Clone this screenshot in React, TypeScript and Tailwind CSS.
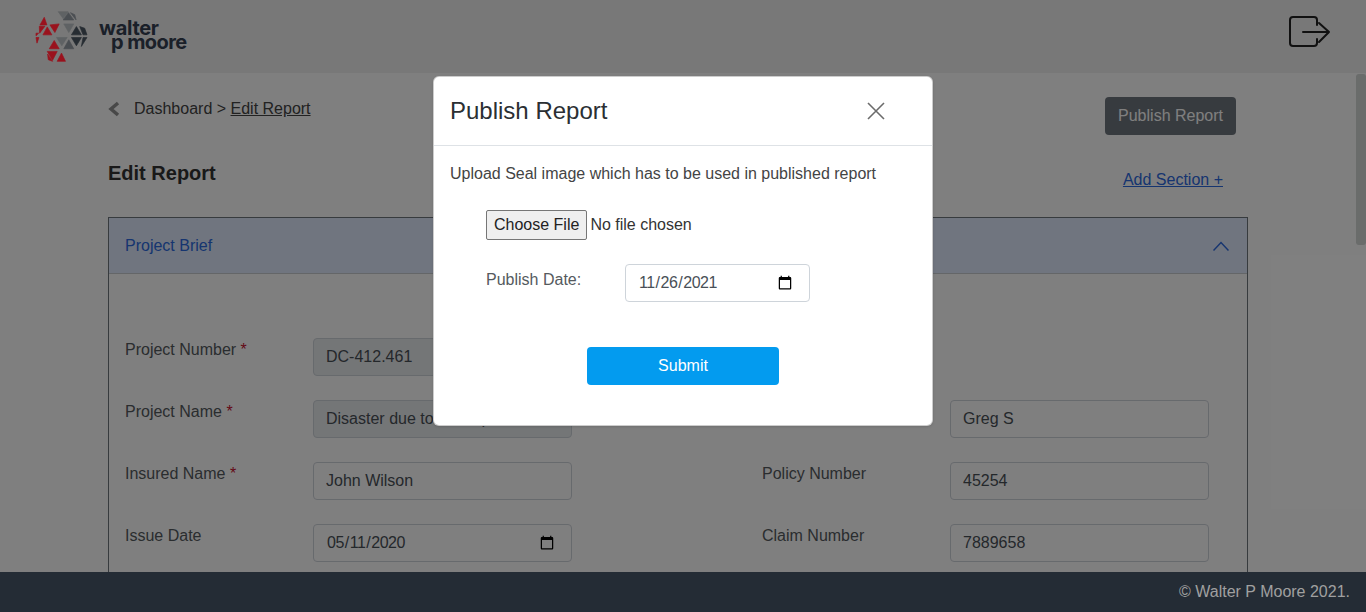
const Logo = () => (
  <svg viewBox="105 30 160 160" className="w-[53px] h-[53px] shrink-0" strokeWidth="2" strokeLinejoin="round">
    <g fill="#9a121d" stroke="#9a121d">
      <polygon points="133,52 120,75 141,75" />
      <polygon points="118,79 135,79 119,100" />
      <polygon points="150,75 178,72 165,98" />
      <polygon points="142,81 156,105 129,105" />
      <polygon points="108,100 116,100 108,108" />
      <polygon points="108,113 117,113 111,130" />
      <polygon points="163,122 178,147 148,147" />
      <polygon points="142,155 172,155 158,182" />
      <polygon points="143,163 158,185 145,180" />
      <polygon points="185,160 197,185 172,185" />
    </g>
    <g fill="#5f6264" stroke="#5f6264">
      <polygon points="175,35 205,35 190,56" />
      <polygon points="192,72 222,72 207,98" />
      <polygon points="170,113 202,113 186,138" />
    </g>
    <g fill="#4a4e52" stroke="#4a4e52">
      <polygon points="206,38 222,60 190,60" />
      <polygon points="212,38 225,44 229,60" />
      <polygon points="207,120 222,147 192,147" />
    </g>
    <g fill="#262c32" stroke="#262c32">
      <polygon points="230,80 245,105 215,105" />
      <polygon points="240,80 255,85 262,105 250,105" />
      <polygon points="215,113 245,113 230,138" />
      <polygon points="250,113 262,113 245,140" />
    </g>
  </svg>
);

const Field = ({ value, type = "text", readOnly = false }: { value: string; type?: string; readOnly?: boolean }) => (
  <input
    type={type}
    defaultValue={value}
    readOnly={readOnly}
    className={`w-[259px] h-[38px] pl-3 border border-[#ced4da] rounded text-[#495057] ${
      type === "date" ? "pr-[14px] tracking-[-0.5px]" : "pr-3"
    } ${readOnly ? "bg-[#e9ecef]" : "bg-white"}`}
  />
);

const Label = ({ text, required = false, className = "" }: { text: string; required?: boolean; className?: string }) => (
  <label className={`block w-[188px] shrink-0 text-[#555a5e] ${className}`}>
    {text} {required && <span className="text-[#c8102e]">*</span>}
  </label>
);

export default function App() {
  return (
    <div className="relative h-screen flex flex-col overflow-hidden bg-white font-['Liberation_Sans',Arial,sans-serif]">
      {/* Header */}
      <header className="relative z-20 h-[73px] shrink-0 flex items-center justify-between pl-[35px] pr-[35px] bg-[#787878]">
        <div className="flex items-center gap-[11px]">
          <Logo />
          <div className="font-['Inter',sans-serif] font-bold text-[20px] leading-[14px] tracking-[-0.3px] text-[#1a2029] -mt-[4px]">
            <div>walter</div>
            <div className="ml-3 tracking-[-0.6px]">p moore</div>
          </div>
        </div>
        <svg viewBox="0 0 42 32" className="w-[42px] h-[32px] mb-[10px]" fill="none" stroke="#111" strokeWidth="2" strokeLinecap="round" strokeLinejoin="round">
          <path d="M28 9V4a3 3 0 0 0-3-3H4a3 3 0 0 0-3 3v23a3 3 0 0 0 3 3h21a3 3 0 0 0 3-3v-4" />
          <path d="M14 16h26M30 7l10 9-10 10" />
        </svg>
      </header>

      {/* Content */}
      <main className="flex-1 overflow-hidden pl-[108px] pr-[118px]">
        <div className="flex justify-between items-start pt-6 pr-3">
          <div className="flex items-center">
            <svg viewBox="0 0 12 16" className="w-3 h-4 mr-[14px]" fill="none" stroke="#909090" strokeWidth="3.5">
              <polyline points="10,2 3,8 10,14" />
            </svg>
            <span className="text-[#444]">Dashboard &gt; <span className="underline">Edit Report</span></span>
          </div>
          <button className="h-[38px] px-[13px] rounded bg-[#6f777f] text-white">Publish Report</button>
        </div>

        <div className="flex justify-between items-start mt-6 pr-[25px]">
          <h1 className="text-xl font-bold text-[#333] leading-[28px]">Edit Report</h1>
          <a className="mt-[9px] text-[#2d6ae0] underline">Add Section +</a>
        </div>

        <section className="mt-[25px] border border-[#6f767d]">
          <div className="h-[56px] flex items-center justify-between pl-4 pr-[18px] bg-[#e1eafe] border-b border-[#c9ccd1]">
            <span className="text-[#2d6ae0]">Project Brief</span>
            <svg viewBox="0 0 16 10" className="w-4 h-[10px]" fill="none" stroke="#2d6ae0" strokeWidth="1.5">
              <polyline points="0.5,9.5 8,1.5 15.5,9.5" />
            </svg>
          </div>
          <div className="pt-[64px] pb-[60px] pl-4 flex flex-col gap-6">
            <div className="flex">
              <Label text="Project Number" required />
              <Field value="DC-412.461" readOnly />
            </div>
            <div className="flex">
              <Label text="Project Name" required />
              <Field value="Disaster due to Earthquake" readOnly />
              <div className="w-[188px] ml-[190px]" />
              <Field value="Greg S" />
            </div>
            <div className="flex">
              <Label text="Insured Name" required />
              <Field value="John Wilson" />
              <Label text="Policy Number" className="ml-[190px]" />
              <Field value="45254" />
            </div>
            <div className="flex">
              <Label text="Issue Date" />
              <Field type="date" value="2020-05-11" />
              <Label text="Claim Number" className="ml-[190px]" />
              <Field value="7889658" />
            </div>
          </div>
        </section>
      </main>

      {/* Footer */}
      <footer className="relative z-20 h-10 shrink-0 flex items-center justify-end pr-4 bg-[#242c35] text-[#a0a0a0]">
        © Walter P Moore 2021.
      </footer>

      {/* Backdrop and modal */}
      <div className="absolute inset-0 z-10 bg-black/50 flex justify-center items-start pt-[76px]">
        <div className="w-[500px] bg-white rounded-md border border-black/20 shadow-sm text-[#444]">
          <div className="h-[69px] flex items-center justify-between pl-4 pr-[47px] border-b border-[#dee2e6]">
            <h2 className="text-2xl text-[#2b2f33]">Publish Report</h2>
            <svg viewBox="0 0 18 18" className="w-[18px] h-[18px]" fill="none" stroke="#6b6b6b" strokeWidth="1.6">
              <path d="M1 1l16 16M17 1L1 17" />
            </svg>
          </div>
          <div className="h-[279px] pt-4 pl-4">
            <p className="leading-6">Upload Seal image which has to be used in published report</p>
            <div className="mt-[24px] ml-[36px]">
              <input
                type="file"
                className="block h-[30px] text-[#333] file:h-[30px] file:px-[7px] file:mr-[3px] file:bg-[#efefef] file:border file:border-[#767676] file:rounded-[2px] file:text-[#222]"
              />
              <div className="flex items-start mt-6">
                <label className="w-[139px] mt-[4px] text-[#555a5e]">Publish Date:</label>
                <input
                  type="date"
                  defaultValue="2021-11-26"
                  className="w-[185px] h-[38px] pl-3 pr-[14px] tracking-[-0.5px] border border-[#ced4da] rounded bg-white text-[#495057]"
                />
              </div>
            </div>
            <button className="block w-[192px] h-[38px] mt-[45px] ml-[137px] rounded bg-[#039bef] text-white">Submit</button>
          </div>
        </div>
      </div>

      {/* Scrollbar */}
      <div className="absolute z-10 right-0 top-[74px] w-[10px] h-[171px] rounded-[3px] bg-[#6a6c6b]" />
    </div>
  );
}
